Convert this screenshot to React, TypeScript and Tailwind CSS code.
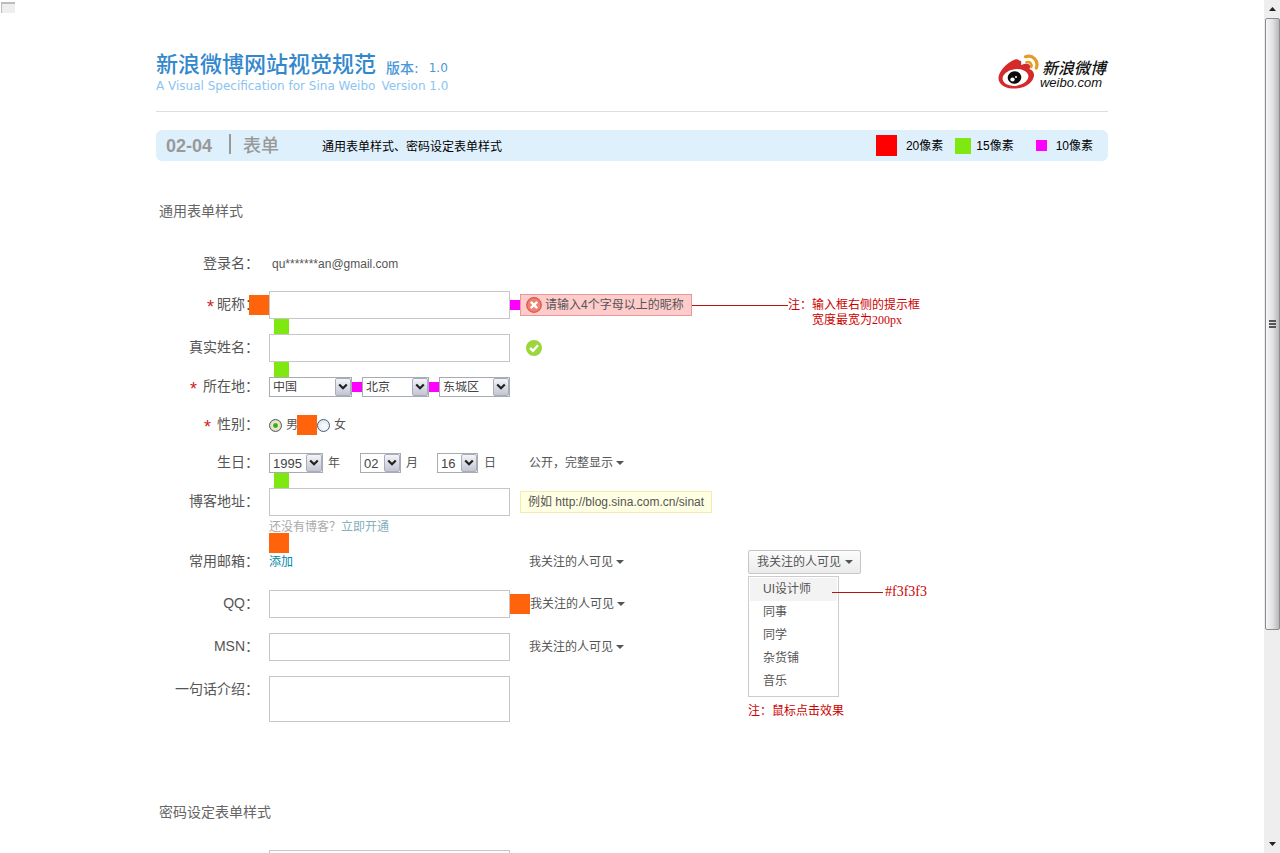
import React from "react";

const sans = "font-['Liberation_Sans','Noto_Sans_CJK_SC',sans-serif]";

function Select({ label, options, className }: { label: string; options: string[]; className: string }) {
  return (
    <span className={`relative flex h-5 shrink-0 ${className}`}>
      <select
        aria-label={label}
        className="h-5 w-full appearance-none border border-[#a5acb2] bg-white pl-[3px] leading-none text-[#444] outline-none"
      >
        {options.map((o) => (
          <option key={o}>{o}</option>
        ))}
      </select>
      <span className="pointer-events-none absolute top-px right-px flex h-[18px] w-4 items-center justify-center rounded-[2px] border border-[#a9acba] bg-gradient-to-b from-[#f4f4f8] to-[#c3c5d3]">
        <svg width="10" height="8" viewBox="0 0 10 8" fill="none" stroke="#222" strokeWidth="2.2" aria-hidden="true">
          <path d="M1.2 1.5 L5 5.3 L8.8 1.5" />
        </svg>
      </span>
    </span>
  );
}

function Caret() {
  return (
    <svg width="8" height="4" viewBox="0 0 8 4" aria-hidden="true">
      <path d="M0 0H8L4 4Z" fill="#555" />
    </svg>
  );
}

function Visibility({ text }: { text: string }) {
  return (
    <button type="button" className="flex shrink-0 items-center gap-[3px] text-xs leading-4 text-[#555]">
      {text}
      <Caret />
    </button>
  );
}

function Row({
  label,
  htmlFor,
  required,
  spaced,
  className,
  children,
}: {
  label: string;
  htmlFor?: string;
  required?: boolean;
  spaced?: boolean;
  className: string;
  children: React.ReactNode;
}) {
  return (
    <div className={`relative flex items-center ${className}`}>
      <label
        htmlFor={htmlFor}
        className="flex w-[113px] shrink-0 items-center justify-end pr-[10px] pb-[2px] text-sm leading-5 whitespace-nowrap text-[#555]"
      >
        {required && <span className={`h-[14px] text-lg leading-5 text-[#c22] ${spaced ? "mr-[6px]" : "mr-[3px]"}`}>*</span>}
        {label}：
      </label>
      {children}
    </div>
  );
}

function GreenGap() {
  return (
    <div className="h-[15px] pl-[118px]">
      <div className="size-[15px] bg-[#7ee810]" />
    </div>
  );
}

const box = "h-7 w-[241px] shrink-0 border border-[#c6c6c6] bg-white px-1 text-xs outline-none";
const radio =
  "size-[13px] shrink-0 appearance-none rounded-full border border-[#3c6080] bg-[radial-gradient(circle_at_60%_60%,#fff,#d5dce4)] checked:bg-[radial-gradient(circle,#2da52d_0,#3fb53f_2px,#f4ead0_3px,#e8cf90_6px)]";

function Logo() {
  return (
    <div className="flex items-start pt-[2px]">
      <svg width="42" height="36" viewBox="0 0 42 36" aria-hidden="true">
        <path
          d="M17 9C22 5 24 6 23 11C30 8.500 33.500 10 31.500 15C36 17 37.500 21 34.500 26C30 33 21 35 14 34.500C6 34 .5 30 .5 24C.5 18 8 9 17 5.500C20 4.600 22 6 21.500 9Z"
          fill="#d52a2c"
        />
        <ellipse cx="17.500" cy="23.500" rx="13" ry="8.300" fill="#fff" transform="rotate(-8 17.500 23.500)" />
        <ellipse cx="16.500" cy="23.500" rx="6.800" ry="6.300" fill="#0a0a0a" transform="rotate(-15 16.500 23.500)" />
        <ellipse cx="14.500" cy="25.500" rx="2.200" ry="1.900" fill="#fff" />
        <circle cx="18" cy="23" r="1" fill="#fff" />
        <path d="M27.500 2.700C35 .3 41 7 38.300 14" fill="none" stroke="#e79a26" strokeWidth="3.200" strokeLinecap="round" />
        <path d="M28.500 8.300C32 7.300 34.300 10 33.200 13" fill="none" stroke="#e79a26" strokeWidth="2.600" strokeLinecap="round" />
      </svg>
      <div className="flex flex-col pt-[7px] text-[#111] italic">
        <span className="pl-[2px] text-base leading-4 font-medium">新浪微博</span>
        <span className="text-[13px] leading-3 font-medium">weibo.com</span>
      </div>
    </div>
  );
}

function Scrollbar() {
  return (
    <div className="flex w-4 shrink-0 flex-col items-center bg-[#eee]" aria-hidden="true">
      <div className="flex h-[18px] items-center">
        <svg width="7" height="4" viewBox="0 0 7 4">
          <path d="M0 4L3.500 0L7 4Z" fill="#222" />
        </svg>
      </div>
      <div className="flex min-h-0 w-[15px] flex-[611] flex-col items-center justify-center gap-px rounded-[2px] border border-[#8c8c8c] bg-gradient-to-r from-[#f6f6f6] via-[#e2e2e4] to-[#b8b8bc]">
        <span className="h-[2px] w-[7px] bg-[#555]" />
        <span className="h-[2px] w-[7px] bg-[#555]" />
        <span className="h-[2px] w-[7px] bg-[#555]" />
      </div>
      <div className="flex-[206]" />
      <div className="flex h-[18px] items-center">
        <svg width="7" height="4" viewBox="0 0 7 4">
          <path d="M0 0L3.500 4L7 0Z" fill="#222" />
        </svg>
      </div>
    </div>
  );
}

export default function App() {
  return (
    <div className={`flex h-screen overflow-hidden bg-white ${sans}`}>
      <main className="relative min-w-0 flex-1 overflow-y-auto [scrollbar-width:none]">
        <div className="absolute top-[2px] left-px h-[11px] w-[14px] border-t-2 border-l border-[#bbb] bg-[#eee]" />
        <div className="mx-auto w-full max-w-[952px] pt-[52px]">
          <header className="flex h-[60px] items-start justify-between border-b border-[#ddd] pr-[2px]">
            <div>
              <h1 className="flex items-center text-[22px] leading-6 font-medium text-[#3388cc]">
                新浪微博网站视觉规范
                <span className="ml-[10px] pt-[6px] font-['DejaVu_Sans','Noto_Sans_CJK_SC',sans-serif] text-sm leading-5 text-[#4a98d8]">
                  版本:
                </span>
                <span className="ml-[10px] pt-[6px] font-['DejaVu_Sans',sans-serif] text-xs leading-5 text-[#4a98d8]">
                  1.0
                </span>
              </h1>
              <p className="flex gap-[6px] font-['DejaVu_Sans',sans-serif] text-xs leading-4 text-[#8cc4f0]">
                <span>A Visual Specification for Sina Weibo</span>
                <span>Version 1.0</span>
              </p>
            </div>
            <Logo />
          </header>

          <div className="mt-[18px] flex h-[31px] items-center rounded-md bg-[#dff0fd] pr-[15px] pl-[10px] text-xs text-black">
            <span className="text-lg font-bold text-[#999]">02-04</span>
            <span className="mb-1 ml-[17px] h-5 w-[2px] bg-[#999]" />
            <h2 className="ml-3 text-lg font-medium text-[#999]">表单</h2>
            <p className="ml-[43px] flex-1 pt-[2px]">通用表单样式、密码设定表单样式</p>
            <span className="size-[21px] bg-[#f00]" />
            <span className="ml-[9px]">20像素</span>
            <span className="ml-3 size-4 bg-[#7ee810]" />
            <span className="ml-[5px]">15像素</span>
            <span className="ml-[22px] size-[11px] bg-[#f0f]" />
            <span className="ml-[9px]">10像素</span>
          </div>

          <form className="text-xs text-[#555]">
            <h3 className="mt-10 pl-[3px] text-sm leading-5 text-[#666]">通用表单样式</h3>

            <Row label="登录名" className="mt-[29px] h-7">
              <span className="pl-[3px]">qu*******an@gmail.com</span>
            </Row>

            <Row label="昵称" htmlFor="nick" required className="mt-[13px] h-7">
              <span className="absolute top-1 left-[93px] size-5 bg-[#ff640c]" />
              <input id="nick" type="text" className={box} />
              <span className="size-[10px] shrink-0 bg-[#f0f]" />
              <span className="flex h-[22px] w-[172px] shrink-0 items-center gap-[3px] border border-[#e8979c] bg-[#ffcccc] pl-[5px] whitespace-nowrap">
                <svg className="shrink-0" width="16" height="16" viewBox="0 0 16 16" aria-hidden="true">
                  <circle cx="8" cy="8" r="7.300" fill="#f08070" stroke="#d8564c" strokeWidth="1.200" />
                  <path d="M4.800 4.800L11.200 11.200M11.200 4.800L4.800 11.200" stroke="#fff" strokeWidth="2.400" />
                </svg>
                请输入4个字母以上的昵称
              </span>
              <span className="h-px w-24 shrink-0 bg-[#b81414]" />
              <p className="h-7 shrink-0 pt-[7px] font-['Liberation_Serif','Noto_Sans_CJK_SC',serif] leading-[15px] whitespace-nowrap text-[#c00]">
                注：输入框右侧的提示框
                <span className="block pl-6">宽度最宽为200px</span>
              </p>
            </Row>
            <GreenGap />

            <Row label="真实姓名" htmlFor="name" className="h-7">
              <input id="name" type="text" className={box} />
              <svg className="ml-4" width="16" height="16" viewBox="0 0 16 16" aria-hidden="true">
                <circle cx="8" cy="8" r="8" fill="#9cd63c" />
                <path d="M4 8L7 10.800L12 5.300" fill="none" stroke="#fff" strokeWidth="2.400" />
              </svg>
            </Row>
            <GreenGap />

            <Row label="所在地" required spaced className="h-5">
              <Select label="国家" options={["中国"]} className="w-[83px]" />
              <span className="size-[10px] bg-[#f0f]" />
              <Select label="城市" options={["北京"]} className="w-[67px]" />
              <span className="size-[10px] bg-[#f0f]" />
              <Select label="城区" options={["东城区"]} className="w-[71px]" />
            </Row>

            <Row label="性别" required spaced className="mt-[18px] h-5">
              <label className="flex items-center gap-1">
                <input type="radio" name="sex" defaultChecked className={radio} />男
              </label>
              <span className="-ml-px size-5 bg-[#ff640c]" />
              <label className="flex items-center gap-1">
                <input type="radio" name="sex" className={radio} />女
              </label>
            </Row>

            <Row label="生日" className="mt-[18px] h-5">
              <div className="flex w-[260px] shrink-0 items-center">
                <Select label="年" options={["1995"]} className="w-[54px] text-[13px]" />
                <span className="ml-[5px]">年</span>
                <Select label="月" options={["02"]} className="ml-5 w-[41px] text-[13px]" />
                <span className="ml-[5px]">月</span>
                <Select label="日" options={["16"]} className="ml-[19px] w-[41px] text-[13px]" />
                <span className="ml-[6px]">日</span>
              </div>
              <Visibility text="公开，完整显示" />
            </Row>
            <GreenGap />

            <Row label="博客地址" htmlFor="blog" className="h-7">
              <input id="blog" type="text" className={box} />
              <span className="ml-[10px] flex h-[22px] shrink-0 items-center border border-[#f2eda8] bg-[#ffffe3] px-[7px] whitespace-nowrap">
                例如 http://blog.sina.com.cn/sinat
              </span>
            </Row>
            <p className="mt-[3px] pl-[113px] leading-4 text-[#aaa]">
              还没有博客？
              <a href="#open" className="text-[#84b0ba]">
                立即开通
              </a>
            </p>

            <Row label="常用邮箱" className="mt-[15px] h-6">
              <span className="absolute -top-[17px] left-[113px] size-5 bg-[#ff640c]" />
              <div className="w-[260px] shrink-0">
                <a href="#add" className="text-[#0088a8]">
                  添加
                </a>
              </div>
              <Visibility text="我关注的人可见" />
              <div className="relative ml-auto w-[360px] shrink-0">
                <button
                  type="button"
                  aria-expanded="true"
                  className="flex h-6 w-[113px] items-center gap-1 rounded-[2px] border border-[#c6c6c6] bg-gradient-to-b from-[#fcfcfc] to-[#ebebeb] pl-2 whitespace-nowrap"
                >
                  我关注的人可见
                  <Caret />
                </button>
                <div className="absolute top-[26px] left-0">
                  <ul className="w-[91px] border border-[#ccc] bg-white px-px pt-px pb-[3px] leading-[23px]">
                    <li className="bg-[#f3f3f3] pl-[13px]">UI设计师</li>
                    <li className="pl-[13px]">同事</li>
                    <li className="pl-[13px]">同学</li>
                    <li className="pl-[13px]">杂货铺</li>
                    <li className="pl-[13px]">音乐</li>
                  </ul>
                  <p className="mt-[6px] leading-4 text-[#c00]">注：鼠标点击效果</p>
                </div>
                <div className="absolute top-[34px] left-[84px] flex items-center gap-[2px] leading-4 text-[#c00]">
                  <span className="h-px w-[51px] bg-[#b81414]" />
                  <span className="font-['Liberation_Serif',serif] text-sm leading-4">#f3f3f3</span>
                </div>
              </div>
            </Row>

            <Row label="QQ" htmlFor="qq" className="mt-4 h-7">
              <input id="qq" type="text" className={box} />
              <span className="size-5 shrink-0 bg-[#ff640c]" />
              <Visibility text="我关注的人可见" />
            </Row>

            <Row label="MSN" htmlFor="msn" className="mt-[15px] h-7">
              <input id="msn" type="text" className={`mr-[19px] ${box}`} />
              <Visibility text="我关注的人可见" />
            </Row>

            <div className="mt-[15px] flex items-start">
              <label
                htmlFor="intro"
                className="w-[113px] shrink-0 pt-[3px] pr-[10px] text-right text-sm leading-5 whitespace-nowrap"
              >
                一句话介绍：
              </label>
              <textarea
                id="intro"
                className="h-[46px] w-[241px] resize-none border border-[#c6c6c6] px-1 text-xs outline-none"
              />
            </div>
          </form>

          <form className="pb-10">
            <h3 className="mt-20 pl-[3px] text-sm leading-5 text-[#666]">密码设定表单样式</h3>
            <div className="mt-7 flex pl-[113px]">
              <input type="password" aria-label="密码" className={box} />
            </div>
          </form>
        </div>
      </main>
      <Scrollbar />
    </div>
  );
}
